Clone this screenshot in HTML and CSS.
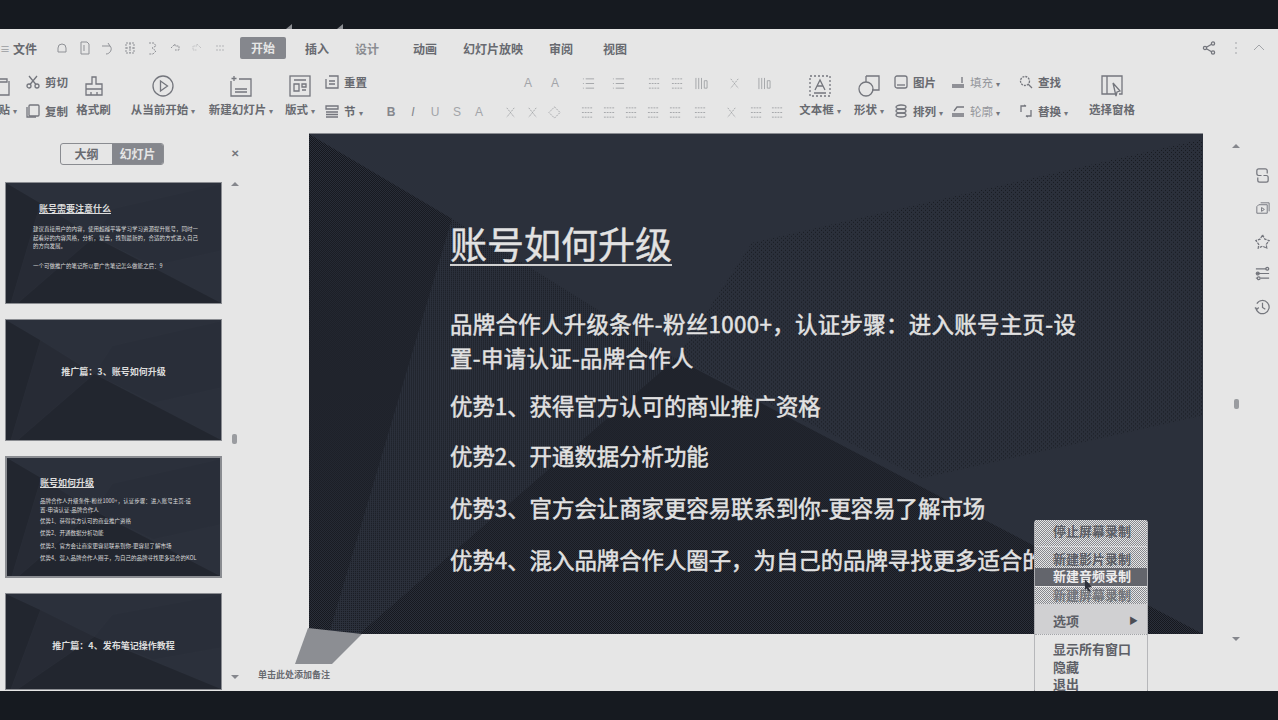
FILE: index.html
```html
<!DOCTYPE html>
<html lang="zh-CN">
<head>
<meta charset="utf-8">
<title>账号如何升级</title>
<link rel="stylesheet" href="styles.css">
</head>
<body>
<svg class="defs" aria-hidden="true">
  <defs>
    <pattern id="dots-sparse" width="4" height="4" patternUnits="userSpaceOnUse">
      <rect width="4" height="4" fill="#2b303b"/>
      <rect x="0" y="0" width="1" height="1" fill="#171a20"/>
      <rect x="2" y="2" width="1" height="1" fill="#171a20"/>
    </pattern>
    <pattern id="dots-mid" width="2" height="2" patternUnits="userSpaceOnUse">
      <rect width="2" height="2" fill="#2b303b"/>
      <rect x="0" y="0" width="1" height="1" fill="#191c23"/>
    </pattern>
    <pattern id="dots-dense" width="2" height="2" patternUnits="userSpaceOnUse">
      <rect width="2" height="2" fill="#2b303b"/>
      <rect x="0" y="0" width="1" height="1" fill="#15171d"/>
      <rect x="1" y="1" width="1" height="1" fill="#15171d"/>
    </pattern>
  </defs>
  <symbol id="slide-bg" viewBox="0 0 894 501" preserveAspectRatio="none">
    <polygon points="894,5 443,109 367,225 613,345 894,282" fill="url(#dots-sparse)"/>
    <polygon points="143,85 367,225 50,501 20,501" fill="url(#dots-mid)"/>
    <polygon points="0,0 143,85 20,501 0,501" fill="url(#dots-dense)"/>
    <polygon points="367,225 894,501 50,501" fill="url(#dots-dense)"/>
  </symbol>
  <symbol id="i-lines" viewBox="0 0 14 14"><path d="M1 2h12M1 7h12M1 12h12" stroke-dasharray="2 1"/></symbol>
  <symbol id="i-list" viewBox="0 0 14 14"><path d="M1 2h1M4 2h9M1 7h1M4 7h9M1 12h1M4 12h9"/></symbol>
  <symbol id="i-cols" viewBox="0 0 14 14"><path d="M1 1v12M4 1v12M7 1v12M10 4h3v8h-3z"/></symbol>
  <symbol id="i-small" viewBox="0 0 14 14"><path d="M3 2l8 10M11 2l-8 10" stroke-dasharray="2 1"/></symbol>
</svg>

<div class="app">
  <header class="top-bar"><i class="speck"></i><i class="speck speck-b"></i></header>

  <div class="tabs">
    <span class="tab-menu">≡</span>
    <span class="tab tab-file">文件</span>
    <div class="quick">
      <svg viewBox="0 0 14 14"><path d="M3 7a4 4 0 0 1 8 0v4H3z"/></svg>
      <svg viewBox="0 0 14 14"><path d="M3 1h6l2 2v10H3zM6 4v6"/></svg>
      <svg viewBox="0 0 14 14"><path d="M2 5h8l-2-3M10 5c3 3 0 8-4 8"/></svg>
      <svg viewBox="0 0 14 14"><path d="M3 2h8v10H3zM3 7h8M7 2v10" stroke-dasharray="2 1"/></svg>
      <svg viewBox="0 0 14 14"><path d="M4 2h5l2 3-4 2 4 3-3 3H4" stroke-dasharray="2 1"/></svg>
      <svg viewBox="0 0 14 14"><path d="M3 7l4-4v2h4v4H7" stroke-dasharray="2 1"/></svg>
      <svg class="faint" viewBox="0 0 14 14"><path d="M11 7L7 3v2H3v4h4" stroke-dasharray="1 1"/></svg>
      <svg class="faint" viewBox="0 0 14 14"><path d="M3 5h8M3 9h8" stroke-dasharray="2 1"/></svg>
    </div>
    <span class="tab tab-active">开始</span>
    <span class="tab tab-insert">插入</span>
    <span class="tab tab-design">设计</span>
    <span class="tab tab-anim">动画</span>
    <span class="tab tab-show">幻灯片放映</span>
    <span class="tab tab-review">审阅</span>
    <span class="tab tab-view">视图</span>
    <div class="tab-actions">
      <svg class="share" viewBox="0 0 14 14"><circle cx="11" cy="2.5" r="1.6"/><circle cx="3" cy="7" r="1.6"/><circle cx="11" cy="11.5" r="1.6"/><path d="M4.4 6.2l5.2-3M4.4 7.8l5.2 3"/></svg>
      <svg class="faint" viewBox="0 0 14 14"><path d="M7 1v2M7 6v2M7 11v2"/></svg>
      <svg class="faint" viewBox="0 0 14 14"><path d="M2 9l5-5 5 5"/></svg>
    </div>
  </div>

  <div class="ribbon">
    <div class="big g-paste">
      <svg viewBox="0 0 22 22"><path d="M6 4h10v3H6zM4 6v14h14V6"/></svg>
      <span>粘贴<b class="caret">▾</b></span>
    </div>
    <div class="stack g-clip">
      <div class="small"><svg viewBox="0 0 14 14"><circle cx="3" cy="11" r="2"/><circle cx="11" cy="11" r="2"/><path d="M4 9.5L11 1M10 9.5L3 1"/></svg><span>剪切</span></div>
      <div class="small"><svg viewBox="0 0 14 14"><rect x="3" y="1" width="10" height="11" rx="1"/><path d="M1 3v10h9"/></svg><span>复制</span></div>
    </div>
    <div class="big g-brush">
      <svg viewBox="0 0 22 22"><path d="M9 2h4v7h6v11H3V9h6zM3 14h16M8 20v-3M14 20v-3"/></svg>
      <span>格式刷</span>
    </div>
    <div class="big g-play">
      <svg viewBox="0 0 22 22"><circle cx="11" cy="11" r="10"/><path d="M8.500 6l7 5-7 5z"/></svg>
      <span>从当前开始<b class="caret">▾</b></span>
    </div>
    <div class="big g-new">
      <svg viewBox="0 0 22 22"><path d="M1 6v15h20V4h-12M5 14h12M5 17h12" /><path d="M4 1v5M1.500 3.500h5"/></svg>
      <span>新建幻灯片<b class="caret">▾</b></span>
    </div>
    <div class="big g-layout">
      <svg viewBox="0 0 22 22"><rect x="1" y="1" width="20" height="20"/><path d="M5 5h12M5 9h5v7H5zM13 9h4v3h-4zM13 15h4"/></svg>
      <span>版式<b class="caret">▾</b></span>
    </div>
    <div class="stack g-reset">
      <div class="small"><svg viewBox="0 0 14 14"><path d="M4 1h9v12H1V4M4 6h6M4 9h6"/></svg><span>重置</span></div>
      <div class="small"><svg viewBox="0 0 14 14"><path d="M1 2h12v3H1zM1 8h12M1 10.500h12M1 13h12"/></svg><span>节<b class="caret">▾</b></span></div>
    </div>

    <div class="format">
      <div class="fmt-row fmt-top">
        <span class="glyph g-a1">A</span><span class="glyph g-a2">A</span>
        <svg class="m-l1"><use href="#i-list"/></svg>
        <svg class="m-l2"><use href="#i-list"/></svg>
        <svg class="m-l3"><use href="#i-lines"/></svg>
        <svg class="m-l4"><use href="#i-lines"/></svg>
        <svg class="m-l5"><use href="#i-cols"/></svg>
        <svg class="m-l6"><use href="#i-small"/></svg>
        <svg class="m-l7"><use href="#i-cols"/></svg>
      </div>
      <div class="fmt-row fmt-bottom">
        <span class="glyph strong">B</span>
        <span class="glyph italic">I</span>
        <span class="glyph">U</span>
        <span class="glyph">S</span>
        <span class="glyph">A</span>
        <svg class="m-x"><use href="#i-small"/></svg>
        <svg><use href="#i-small"/></svg>
        <svg class="m-d" viewBox="0 0 14 14"><path d="M7 1l6 6-6 6-6-6z" stroke-dasharray="2 1"/></svg>
        <svg class="m-a1"><use href="#i-lines"/></svg>
        <svg class="m-a2"><use href="#i-lines"/></svg>
        <svg class="m-a2"><use href="#i-lines"/></svg>
        <svg class="m-a3"><use href="#i-lines"/></svg>
        <svg class="m-a4"><use href="#i-lines"/></svg>
        <svg class="m-a5"><use href="#i-lines"/></svg>
        <svg class="m-a6"><use href="#i-small"/></svg>
        <svg class="m-a7"><use href="#i-lines"/></svg>
        <svg class="m-a8"><use href="#i-lines"/></svg>
      </div>
    </div>

    <div class="big g-text">
      <svg viewBox="0 0 22 22"><rect x="1" y="1" width="20" height="20" stroke-dasharray="2 2"/><path d="M6 15l5-10 5 10M8 11h6M5 18h12"/></svg>
      <span>文本框<b class="caret">▾</b></span>
    </div>
    <div class="big g-shape">
      <svg viewBox="0 0 22 22"><path d="M8 1h13v14H14"/><circle cx="8" cy="14" r="7"/><path d="M8 1v6"/></svg>
      <span>形状<b class="caret">▾</b></span>
    </div>
    <div class="stack g-pic">
      <div class="small"><svg viewBox="0 0 14 14"><rect x="1" y="1" width="12" height="12" rx="2"/><path d="M3 10h8"/></svg><span>图片</span></div>
      <div class="small"><svg viewBox="0 0 14 14"><ellipse cx="7" cy="3" rx="5" ry="2"/><ellipse cx="7" cy="7" rx="5" ry="2"/><ellipse cx="7" cy="11" rx="5" ry="2"/></svg><span>排列<b class="caret">▾</b></span></div>
    </div>
    <div class="stack g-fill">
      <div class="small"><svg viewBox="0 0 14 14"><path d="M11 2v6M1 10h12M1 12h12"/></svg><span class="soft">填充<b class="caret">▾</b></span></div>
      <div class="small"><svg viewBox="0 0 14 14"><path d="M3 7l3-4h7M1 10h12M1 12h12"/></svg><span class="soft">轮廓<b class="caret">▾</b></span></div>
    </div>
    <div class="stack g-find">
      <div class="small"><svg viewBox="0 0 14 14"><circle cx="6" cy="6" r="4.500" stroke-dasharray="2 1"/><path d="M9 9l4 4"/></svg><span>查找</span></div>
      <div class="small"><svg viewBox="0 0 14 14"><path d="M2 8V2h5l-2-1M12 6v6H7l2 1"/></svg><span>替换<b class="caret">▾</b></span></div>
    </div>
    <div class="big g-pane">
      <svg viewBox="0 0 22 22"><path d="M14 19H1V1h20v18h-3M6 1v18M12 8l7 8-3 1-1 4z"/></svg>
      <span>选择窗格</span>
    </div>
  </div>

  <div class="workspace">
    <aside class="sidebar">
      <div class="switch-row">
        <div class="switch"><span class="sw-item">大纲</span><span class="sw-item sw-on">幻灯片</span></div>
        <span class="close">✕</span>
      </div>
      <div class="side-body">
        <div class="thumbs">
          <div class="thumb t-intro">
            <svg class="slide-bg"><use href="#slide-bg"/></svg>
            <p class="t-title">账号需要注意什么</p>
            <p class="t-body">建议直接用户的内容，使用超越平等学习学习资源提升账号，同时一起看好的内容风格，分析，复盘，找到最新的，合适的方式进入自己的方向发展。</p>
            <p class="t-body t-gap">一个可做推广的笔记所以要广告笔记怎么做能之后：9</p>
          </div>
          <div class="thumb t-center">
            <svg class="slide-bg"><use href="#slide-bg"/></svg>
            <p class="t-head">推广篇：3、账号如何升级</p>
          </div>
          <div class="thumb t-current">
            <svg class="slide-bg"><use href="#slide-bg"/></svg>
            <p class="t-title">账号如何升级</p>
            <p class="t-body t-first">品牌合作人升级条件-粉丝1000+，认证步骤：进入账号主页-设<br>置-申请认证-品牌合作人</p>
            <p class="t-body t-m1">优势1、获得官方认可的商业推广资格</p>
            <p class="t-body t-m1">优势2、开通数据分析功能</p>
            <p class="t-body t-m2">优势3、官方会让商家更容易联系到你-更容易了解市场</p>
            <p class="t-body t-m1">优势4、混入品牌合作人圈子，为自己的品牌寻找更多适合的KOL</p>
          </div>
          <div class="thumb t-center t-cut">
            <svg class="slide-bg"><use href="#slide-bg"/></svg>
            <p class="t-head">推广篇：4、发布笔记操作教程</p>
          </div>
        </div>
        <div class="side-scroll">
          <i class="arrow-up"></i>
          <i class="grip"></i>
          <i class="arrow-down"></i>
        </div>
      </div>
    </aside>

    <main class="stage">
      <section class="slide">
        <svg class="slide-bg"><use href="#slide-bg"/></svg>
        <h1 class="s-title">账号如何升级</h1>
        <p class="s-line s-first">品牌合作人升级条件-粉丝1000+，认证步骤：进入账号主页-设<br>置-申请认证-品牌合作人</p>
        <p class="s-line s-m14">优势1、获得官方认可的商业推广资格</p>
        <p class="s-line s-m16">优势2、开通数据分析功能</p>
        <p class="s-line s-m18">优势3、官方会让商家更容易联系到你-更容易了解市场</p>
        <p class="s-line s-m18">优势4、混入品牌合作人圈子，为自己的品牌寻找更多适合的KOL</p>
      </section>
      <p class="notes">单击此处添加备注</p>
      <svg class="smear" viewBox="0 0 70 37"><polygon points="13,0 67,6 37,36 0,36"/></svg>
    </main>

    <div class="rail">
      <div class="rail-scroll">
        <i class="arrow-up"></i>
        <i class="grip grip-r"></i>
        <i class="arrow-down"></i>
      </div>
      <div class="rail-icons">
        <svg viewBox="0 0 18 18"><path d="M14 7V4a2 2 0 0 0-2-2H5a2 2 0 0 0-2 2v3a2 2 0 0 0 2 2h3M4 11v3a2 2 0 0 0 2 2h7a2 2 0 0 0 2-2v-3a2 2 0 0 0-2-2h-3"/></svg>
        <svg class="r-thin" viewBox="0 0 18 18"><path d="M5 5h9v9H3V7zM7 3h9v9M8 8l3 2-3 2z"/></svg>
        <svg viewBox="0 0 18 18"><path d="M9 2l2.500 4.500L16 8l-3 4 .5 4-4.500-2-4.500 2 .5-4-3-4 4.500-1.500z" stroke-dasharray="3 1"/></svg>
        <svg viewBox="0 0 18 18"><path d="M2 4h11M15 4h1M2 9h14M7 14h9M2 14h1"/><circle cx="14" cy="4" r="1.500"/><circle cx="4" cy="9" r="1.500"/><circle cx="5" cy="14" r="1.500"/></svg>
        <svg viewBox="0 0 18 18"><path d="M3 6a7 7 0 1 1-1 4M1 10l2 2 2-2M9 5v5l3 2"/></svg>
      </div>
    </div>
  </div>

  <footer class="bottom-bar"></footer>

  <div class="tray-menu">
    <div class="m-group m-stop"><span>停止屏幕录制</span></div>
    <div class="m-group m-rec"><span>新建影片录制</span></div>
    <div class="m-item m-hover"><span>新建音频录制</span></div>
    <div class="m-item m-dim"><span>新建屏幕录制</span></div>
    <div class="m-item m-opt"><span>选项</span><b>▶</b></div>
    <div class="m-item m-plain m-show"><span>显示所有窗口</span></div>
    <div class="m-item m-plain"><span>隐藏</span></div>
    <div class="m-item m-plain m-last"><span>退出</span></div>
    <svg class="cursor" viewBox="0 0 10 14"><path d="M1 0l8 9H5l2 4-2 1-2-4-2 2z"/></svg>
  </div>
</div>
</body>
</html>
```
FILE: styles.css
```css
* { box-sizing: border-box; }
html, body { margin: 0; padding: 0; }
body {
  width: 1278px;
  height: 720px;
  overflow: hidden;
  background: #161a20;
  font-family: "Noto Sans CJK SC", "Liberation Sans", sans-serif;
  color: #686a70;
}
p, h1 { margin: 0; }
.defs { position: absolute; width: 0; height: 0; }
svg { fill: none; stroke: #74767d; stroke-width: 1.3; flex: none; }
.defs rect, .defs polygon { stroke: none; }

.app {
  position: relative;
  width: 1278px;
  height: 720px;
  display: flex;
  flex-direction: column;
  overflow: hidden;
  background: #e6e6e6;
}

/* top bar */
.top-bar {
  height: 29px;
  flex: none;
  background: #161a20;
  display: flex;
  align-items: flex-end;
  padding-left: 286px;
}
.speck {
  width: 6px;
  height: 5px;
  background: #8c8e93;
  clip-path: polygon(100% 0, 100% 100%, 0 100%);
}
.speck-b { margin-left: 45px; }

/* tabs */
.tabs {
  height: 38px;
  flex: none;
  display: flex;
  align-items: center;
  font-size: 12px;
  font-weight: 700;
  white-space: nowrap;
}
.tab-menu { width: 12px; font-size: 10px; font-weight: 400; color: #9a9ca0; }
.tab-file { margin-left: 1px; width: 37px; }
.quick { display: flex; gap: 8.500px; width: 190px; padding-left: 5px; }
.quick svg { width: 14px; height: 14px; stroke: #8f9196; stroke-width: 1; }
.quick .faint { stroke: #b4b5b8; }
.tab-active {
  width: 46px;
  height: 22px;
  line-height: 22px;
  text-align: center;
  background: #85878d;
  color: #e6e6e6;
  border-radius: 2px;
}
.tab-insert { margin-left: 19px; }
.tab-design { margin-left: 26px; color: #8b8d92; }
.tab-anim { margin-left: 34px; }
.tab-show { margin-left: 26px; }
.tab-review { margin-left: 26px; }
.tab-view { margin-left: 30px; }
.tab-actions {
  margin-left: auto;
  display: flex;
  align-items: center;
  gap: 9px;
  padding-right: 12px;
}
.tab-actions svg { width: 14px; height: 14px; }
.tab-actions .share { margin-right: 4px; }
.tab-actions .faint { stroke: #a2a4a8; stroke-width: 1; }

/* ribbon */
.ribbon {
  height: 66px;
  flex: none;
  display: flex;
  font-size: 11.500px;
  font-weight: 700;
  white-space: nowrap;
}
.caret { font-size: 8px; font-weight: 400; margin-left: 3px; color: #74767d; }
.big {
  display: flex;
  flex-direction: column;
  align-items: center;
  padding-top: 8px;
  gap: 2px;
}
.big svg { width: 22px; height: 22px; }
.big span { line-height: 16px; margin-top: 2px; }
.stack {
  display: flex;
  flex-direction: column;
  gap: 8px;
  padding-top: 4px;
}
.small { display: flex; align-items: center; gap: 5px; height: 21px; }
.small svg { width: 14px; height: 14px; }
.soft { color: #93959a; font-weight: 400; }

.g-paste { margin-left: -22px; width: 48px; }
.g-clip { width: 49px; }
.g-brush { width: 37px; margin-left: 0; }
.g-play { margin-left: 16px; width: 70px; }
.g-new { margin-left: 8px; width: 70px; }
.g-layout { margin-left: 5px; width: 38px; }
.g-reset { margin-left: 6px; width: 59px; }
.g-text { margin-left: -3px; width: 50px; }
.g-shape { margin-left: 6px; width: 36px; }
.g-pic { margin-left: 7px; width: 57px; }
.g-fill { margin-left: 0; width: 69px; }
.g-find { margin-left: -1px; width: 69px; }
.g-pane { margin-left: 1px; width: 46px; }

.format { width: 414px; display: flex; flex-direction: column; }
.fmt-row { display: flex; align-items: center; height: 22px; }
.fmt-top { margin-top: 5px; padding-left: 137px; }
.fmt-bottom { margin-top: 7px; padding-left: 0; }
.fmt-row svg { width: 13px; height: 13px; stroke: #a2a4a8; stroke-width: 1; }
.glyph {
  width: 14px;
  text-align: center;
  font: 400 12px "Liberation Sans", sans-serif;
  color: #a2a4a8;
}
.g-a2 { margin-left: 13px; }
.m-l1 { margin-left: 20px; }
.m-l2 { margin-left: 17px; }
.m-l3 { margin-left: 23px; }
.m-l4 { margin-left: 10px; }
.m-l5 { margin-left: 11px; }
.m-l6 { margin-left: 20px; }
.m-l7 { margin-left: 17px; }
.fmt-bottom .glyph { margin-right: 8px; font-size: 12px; }
.fmt-bottom .strong { font-weight: 700; color: #85878d; }
.fmt-bottom .italic { font-style: italic; color: #85878d; }
.m-x { margin-left: 10px; }
.fmt-bottom .m-x + svg { margin-left: 9px; }
.m-d { margin-left: 9px; }
.m-a1 { margin-left: 20px; }
.m-a2 { margin-left: 9px; }
.m-a3 { margin-left: 9px; }
.m-a4 { margin-left: 9px; }
.m-a5 { margin-left: 12px; }
.m-a6 { margin-left: 18px; }
.m-a7 { margin-left: 12px; }
.m-a8 { margin-left: 8px; }

/* workspace */
.workspace {
  flex: 1;
  display: flex;
  min-height: 0;
}
.sidebar {
  width: 245px;
  flex: none;
  display: flex;
  flex-direction: column;
}
.switch-row {
  height: 49px;
  flex: none;
  display: flex;
  align-items: flex-start;
  padding: 10px 0 0 60px;
}
.switch {
  width: 104px;
  height: 22px;
  display: flex;
  border: 1px solid #8a8c91;
  border-radius: 3px;
  overflow: hidden;
  font-size: 12px;
  font-weight: 700;
}
.sw-item {
  width: 51px;
  line-height: 20px;
  text-align: center;
}
.sw-on { flex: 1; background: #85878d; color: #e6e6e6; }
.close {
  margin: 2px 0 0 67px;
  font-size: 10px;
  font-weight: 700;
  color: #74767d;
}
.side-body {
  flex: 1;
  display: flex;
  padding-left: 5px;
  min-height: 0;
}
.thumbs {
  width: 217px;
  display: flex;
  flex-direction: column;
  gap: 15px;
}
.thumb {
  position: relative;
  height: 122px;
  flex: none;
  background: #2b303b;
  border: 1px solid #8a8c91;
  overflow: hidden;
  color: #dcdcdc;
  font-size: 5.500px;
  line-height: 8.500px;
  white-space: nowrap;
}
.t-current { border-width: 2px; }
.t-cut { height: 97px; }
.slide-bg { position: absolute; inset: 0; width: 100%; height: 100%; stroke: none; }
.thumb p { position: relative; }
.t-intro { padding-left: 27px; padding-top: 19px; }
.t-current { padding-left: 33px; padding-top: 18px; }
.t-title {
  font-size: 9px;
  line-height: 13px;
  margin-bottom: 8px;
  text-decoration: underline;
  font-weight: 700;
}
.t-intro .t-title { margin-left: 6px; margin-bottom: 10px; }
.t-current .t-title { margin-left: 0; }
.t-intro .t-body { white-space: normal; width: 165px; line-height: 8.500px; }
.t-intro .t-gap { margin-top: 11px; }
.t-current .t-first { margin-top: 1px; }
.t-m1 { margin-top: 3px; }
.t-m2 { margin-top: 5px; }
.t-center {
  display: flex;
  justify-content: center;
  padding-top: 46px;
}
.t-center .t-head {
  font-size: 9px;
  line-height: 12px;
  font-weight: 700;
}
.side-scroll {
  width: 23px;
  height: 497px;
  display: flex;
  flex-direction: column;
  align-items: center;
  justify-content: space-between;
  padding-left: 2px;
}
.arrow-up {
  width: 0; height: 0;
  border: 4px solid transparent;
  border-top: 0;
  border-bottom: 4px solid #85878d;
}
.arrow-down {
  width: 0; height: 0;
  border: 4px solid transparent;
  border-bottom: 0;
  border-top: 4px solid #85878d;
}
.grip {
  width: 5px;
  height: 10px;
  margin-top: 16px;
  background: #9a9ca0;
  border-radius: 2px;
}
.grip-r { margin-top: 23px; }

.stage {
  position: relative;
  width: 958px;
  flex: none;
}
.slide {
  position: relative;
  width: 894px;
  height: 501px;
  margin-left: 64px;
  padding: 84px 0 0 141px;
  background: #2b303b;
  border-top: 1px solid #8a8c91;
  color: #e2e2e2;
  white-space: nowrap;
  overflow: hidden;
}
.s-title, .s-line { position: relative; }
.s-title {
  display: inline-block;
  font-size: 37px;
  line-height: 50px;
  font-weight: 400;
  -webkit-text-stroke: 0.4px #e2e2e2;
  border-bottom: 2px solid #d0d0d0;
  height: 48px;
}
.s-line {
  font-size: 22.400px;
  line-height: 34px;
  font-weight: 400;
  -webkit-text-stroke: 0.5px #e2e2e2;
}
.s-first { margin-top: 40px; letter-spacing: 0.36px; }
.s-m14 { margin-top: 14px; }
.s-m16 { margin-top: 16px; }
.s-m18 { margin-top: 18px; }
.notes {
  margin: 34px 0 0 13px;
  font-size: 9px;
  line-height: 14px;
  font-weight: 700;
}
.smear {
  position: absolute;
  left: 50px;
  top: 495px;
  width: 70px;
  height: 37px;
  stroke: none;
  fill: #8c8e93;
}

.rail {
  flex: 1;
  display: flex;
  padding-top: 8px;
}
.rail-scroll {
  width: 66px;
  height: 500px;
  display: flex;
  flex-direction: column;
  align-items: center;
  justify-content: space-between;
  padding-top: 3px;
}
.rail-icons {
  margin-left: -15px;
  padding-top: 26px;
  display: flex;
  flex-direction: column;
  gap: 15.750px;
  align-self: flex-start;
}
.rail-icons svg { width: 17px; height: 17px; }
.rail-icons .r-thin { stroke-width: 1; }

.bottom-bar {
  height: 29px;
  flex: none;
  background: #161a20;
}

/* tray menu */
.tray-menu {
  --dither: repeating-conic-gradient(#e6e6e6 0 25%, #85878d 0 50%) 0 0 / 2px 2px;
  position: absolute;
  left: 1034px;
  top: 520px;
  width: 114px;
  height: 171px;
  overflow: hidden;
  background: linear-gradient(#d0d0d2 0, #d0d0d2 114px, #e6e6e6 114px);
  border-left: 1px dotted #85878d;
  border-right: 1px dotted #85878d;
  border-radius: 3px 3px 0 0;
  font-size: 13px;
  font-weight: 700;
  color: #5d5f66;
  white-space: nowrap;
}
.m-group { padding-left: 18px; background: var(--dither); }
.m-stop { height: 27px; padding-top: 2px; line-height: 18px; border-bottom: 1px solid #d6d6d8; }
.m-rec { height: 21px; padding-top: 3px; line-height: 18px; }
.m-item { height: 18px; line-height: 18px; padding-left: 18px; display: flex; justify-content: space-between; }
.m-hover { background: #63656c; color: #ececec; line-height: 16px; }
.m-dim { color: #74767c; background: var(--dither); border-top: 1px solid #e6e6e6; line-height: 16px; }
.m-opt { margin-top: 6px; height: 22px; line-height: 22px; padding-right: 9px; }
.m-opt b { font-size: 9px; font-weight: 400; color: #4c4e55; }
.m-show { margin-top: 2px; border-top: 1px dotted #a2a4a8; padding-top: 5px; height: 24px; }
.m-last { height: 15px; line-height: 16px; }
.cursor {
  position: absolute;
  left: 49px;
  top: 59px;
  width: 9px;
  height: 13px;
  stroke: none;
  fill: #30333b;
}
```
